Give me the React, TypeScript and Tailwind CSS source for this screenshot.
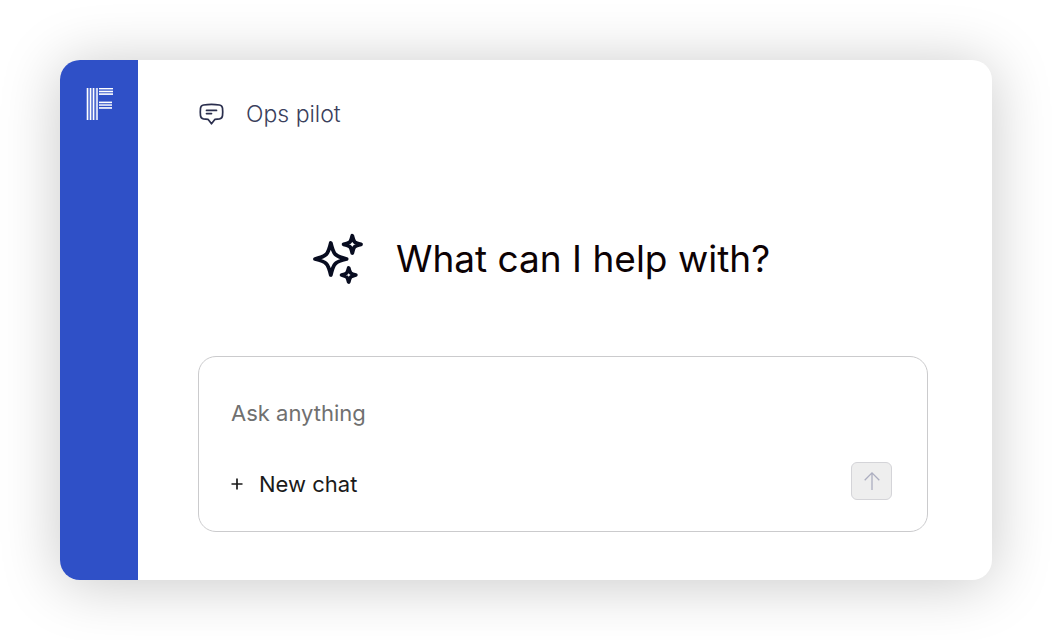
import { useState } from "react";

function Logo() {
  return (
    <svg className="h-8 w-7" viewBox="0 0 28 32" fill="#fff" role="img" aria-label="F">
      <rect x="1.7" y="0" width="1.7" height="32" />
      <rect x="4.7" y="0" width="1.7" height="32" />
      <rect x="7.7" y="0" width="1.7" height="32" />
      <rect x="10.8" y="0" width="2.2" height="32" fillOpacity="0.75" />
      <rect x="14" y="0" width="14" height="1.4" />
      <rect x="14" y="2.7" width="14" height="1.6" />
      <rect x="14" y="5.3" width="14" height="1.6" />
      <rect x="14" y="13.6" width="13" height="1.6" />
      <rect x="14" y="16.2" width="13" height="1.7" fillOpacity="0.85" />
      <rect x="14" y="19" width="13" height="1.9" fillOpacity="0.85" />
    </svg>
  );
}

function ChatIcon() {
  return (
    <svg
      className="h-6 w-[26px]"
      viewBox="0 0 26 24"
      fill="none"
      stroke="#2a2e4d"
      strokeWidth="1.7"
      strokeLinecap="round"
      strokeLinejoin="round"
      aria-hidden="true"
    >
      <path d="M5.5 3C10.8 2.3 16.2 2.3 21.5 3C23.4 3.3 24.3 4.4 24.5 6.2C24.8 8.8 24.8 11 24.5 13.6C24.3 15.5 23.4 16.5 21.5 16.8L17 17.3L13.5 21.8L10 17.3L5.5 16.8C3.6 16.5 2.7 15.5 2.5 13.6C2.2 11 2.2 8.8 2.5 6.2C2.7 4.4 3.6 3.3 5.5 3Z" />
      <path d="M8.5 8.4H18.5M8.5 11.6H13.5" />
    </svg>
  );
}

function Sparkles() {
  return (
    <svg
      className="h-[52px] w-[52px] shrink-0"
      viewBox="0 0 52 52"
      fill="none"
      stroke="#080c20"
      strokeWidth="3.8"
      strokeLinejoin="round"
      aria-hidden="true"
    >
      <path d="M18.8 10C20.2 15.8 21.5 19.6 23.4 21.4C25.2 23.3 29 24.6 34.6 26C29 27.4 25.2 28.7 23.4 30.6C21.5 32.4 20.2 36.2 18.8 42C17.4 36.2 16.1 32.4 14.2 30.6C12.4 28.7 8.6 27.4 3 26C8.6 24.6 12.4 23.3 14.2 21.4C16.1 19.6 17.4 15.8 18.8 10Z" />
      <path d="M40.3 2.8C41.2 6.4 42 8.3 42.7 8.9C43.3 9.6 45.2 10.4 49 11.3C45.2 12.2 43.3 13 42.7 13.7C42 14.3 41.2 16.2 40.3 20C39.4 16.2 38.6 14.3 37.9 13.7C37.3 13 35.4 12.2 31.6 11.3C35.4 10.4 37.3 9.6 37.9 8.9C38.6 8.3 39.4 6.4 40.3 2.8Z" />
      <path d="M36.7 35C37.5 38 38.2 39.5 38.7 40C39.2 40.5 40.8 41.2 43.8 42C40.8 42.8 39.2 43.5 38.7 44C38.2 44.5 37.5 46 36.7 49C35.9 46 35.2 44.5 34.7 44C34.2 43.5 32.6 42.8 29.6 42C32.6 41.2 34.2 40.5 34.7 40C35.2 39.5 35.9 38 36.7 35Z" />
    </svg>
  );
}

export default function App() {
  const [message, setMessage] = useState("");

  return (
    <div className="flex min-h-screen bg-white p-[60px] font-['Inter',sans-serif]">
      <div className="flex flex-1 overflow-hidden rounded-[20px] bg-white shadow-[0_4px_60px_rgba(0,0,0,0.22)]">
        <aside className="flex w-[78px] shrink-0 justify-center bg-[#2f50c7] pt-7">
          <Logo />
        </aside>

        <main className="flex min-w-0 flex-1 flex-col pt-10 pr-16 pb-12 pl-[60px]">
          <header className="flex items-center gap-[22px]">
            <ChatIcon />
            <span className="text-[23px] leading-7 font-light text-[#3b3f5c]">Ops pilot</span>
          </header>

          <div className="flex flex-1 items-center justify-center gap-8 pt-[34px] pr-11">
            <Sparkles />
            <h1 className="text-[37px] leading-12 text-[#0d0204]">What can I help with?</h1>
          </div>

          <form
            className="rounded-[18px] border border-[#cbcbcd] pt-10 pr-[35px] pb-[31px] pl-8"
            onSubmit={(e) => {
              e.preventDefault();
              setMessage("");
            }}
          >
            <input
              aria-label="Message"
              value={message}
              onChange={(e) => setMessage(e.target.value)}
              placeholder="Ask anything"
              className="block w-full text-[22px] leading-8 text-[#1a1a1a] outline-none placeholder:text-[#707070]"
            />

            <div className="mt-[33px] flex items-end justify-between">
              <button type="button" className="flex items-center gap-4 text-[22px] leading-8 text-[#1a1a1a]">
                <svg className="h-3 w-3" viewBox="0 0 12 12" stroke="#1a1a1a" strokeWidth="1.7" aria-hidden="true">
                  <path d="M6 0.5V11.5M0.5 6H11.5" />
                </svg>
                New chat
              </button>

              <button
                type="submit"
                aria-label="Send"
                className="flex h-[38px] w-[41px] items-center justify-center rounded-md border border-[#d4d4d8] bg-[#eeeeee]"
              >
                <svg
                  className="h-[18px] w-4"
                  viewBox="0 0 16 18"
                  fill="none"
                  stroke="#acaec0"
                  strokeWidth="1.3"
                  aria-hidden="true"
                >
                  <path d="M8 18V0.8M0.7 8.2L8 0.9L15.3 8.2" />
                </svg>
              </button>
            </div>
          </form>
        </main>
      </div>
    </div>
  );
}
